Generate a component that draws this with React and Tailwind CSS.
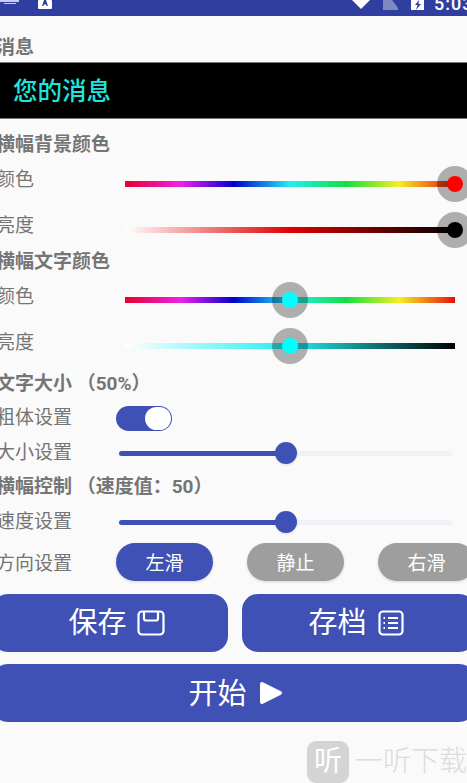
const hue = 'bg-[linear-gradient(to_right,#e8002a,#f01fe8_17%,#0000d0_33%,#22eef0_50%,#10e040_67%,#f4f020_83%,#e81010)]';

function Title({ children, className = '' }) {
    return <div className={`flex h-6 items-center pt-[3px] text-[19px] font-bold text-[#757575] ${className}`}>{children}</div>;
}

function ColorRow({ label, track, thumb, pos, shift }) {
    return (
        <div className="flex h-[46px] items-center text-[19px] text-[#757575]">
            <span className="w-[129px] pt-[3px]">{label}</span>
            <div className={`relative h-[6px] w-[330px] ${shift} ${track}`}>
                <span className={`absolute top-1/2 h-9 w-9 -translate-x-1/2 -translate-y-1/2 rounded-full bg-black/30 ${pos}`} />
                <span className={`absolute top-1/2 h-4 w-4 -translate-x-1/2 -translate-y-1/2 rounded-full ${pos} ${thumb}`} />
            </div>
        </div>
    );
}

function SeekRow({ label }) {
    return (
        <div className="flex h-[34px] items-center text-[19px] text-[#757575]">
            <span className="w-[123px] pt-[3px]">{label}</span>
            <div className="relative mt-[2px] h-[5px] w-[333px] rounded-full bg-[#f0f0f7]">
                <div className="h-full w-1/2 rounded-full bg-[#3f51b5]" />
                <span className="absolute left-1/2 top-1/2 h-[22px] w-[22px] -translate-x-1/2 -translate-y-1/2 rounded-full bg-[#3f51b5] shadow-sm" />
            </div>
        </div>
    );
}

function Pill({ children, on }) {
    return (
        <div className={`flex h-[38px] w-[97px] shrink-0 items-center justify-center rounded-full pt-1 text-[19px] text-white shadow-[0_1px_3px_rgba(0,0,0,0.15)] ${on ? 'bg-[#3f51b5]' : 'bg-[#9e9e9e]'}`}>
            {children}
        </div>
    );
}

function SaveIcon() {
    return (
        <svg width="28" height="26" viewBox="0 0 28 26" fill="none" stroke="white" strokeWidth="2.2" className="ml-[10px]">
            <rect x="1.5" y="1.500" width="25" height="23" rx="3.5" />
            <path d="M7 2v6.500a2 2 0 0 0 2 2h10a2 2 0 0 0 2-2V2" />
        </svg>
    );
}

function ListIcon() {
    return (
        <svg width="26" height="26" viewBox="0 0 26 26" fill="none" stroke="white" strokeWidth="2.2" className="ml-[11px]">
            <rect x="1.5" y="1.500" width="23" height="23" rx="3.5" />
            <path d="M10 8h10M10 13h10M10 18h10M5.500 8h1.500M5.500 13h1.500M5.500 18h1.500" />
        </svg>
    );
}

export default function App() {
    return (
        <div className="relative h-[783px] w-[467px] overflow-hidden bg-[#fafafa] font-['Roboto','Noto_Sans_CJK_SC',sans-serif]">
            <div className="flex h-4 items-start overflow-hidden bg-[#303f9f]">
                <svg width="22" height="4" viewBox="0 0 22 4" className="ml-0 shrink-0">
                    <path d="M0 0h19v2H0zM4 3h12v1H4z" fill="#c8cde8" />
                </svg>
                <svg width="14" height="9" viewBox="0 0 14 9" className="ml-4 shrink-0">
                    <rect width="14" height="9" rx="1" fill="white" />
                    <path d="M4 6l2-6h2l2 6H8.600l-.4-1.400H5.800L5.400 6z" fill="#303f9f" />
                </svg>
                <svg width="18" height="9" viewBox="0 0 18 9" className="ml-[300px] shrink-0">
                    <path d="M0 0h18L9 9z" fill="white" />
                </svg>
                <svg width="15" height="10" viewBox="0 0 15 10" className="ml-[13px] shrink-0">
                    <path d="M0 0h9l6 8v2H0z" fill="#7f8ac4" />
                </svg>
                <svg width="13" height="10" viewBox="0 0 13 10" className="ml-[13px] shrink-0">
                    <rect width="13" height="10" fill="white" />
                    <path d="M8 0L4 5h2.500L5 10l5-6H7.500z" fill="#303f9f" />
                </svg>
                <span className="-mt-[7px] ml-[10px] shrink-0 text-[18px] font-medium leading-[22px] tracking-[1px] text-white">5:03</span>
            </div>

            <div className="-ml-1 w-[490px]">
                <div className="flex h-[46px] items-end text-[19px] font-bold text-[#757575]">消息</div>
                <div className="ml-1 flex h-[57px] w-[467px] items-center border-y border-[#777] bg-black pl-[13px] pt-[3px] text-[24.500px] font-medium text-[#1fe5dc]">您的消息</div>

                <Title className="mt-[13px]">横幅背景颜色</Title>
                <ColorRow label="颜色" track={hue} thumb="bg-[#ff0000]" pos="left-full" shift="mt-[10px]" />
                <ColorRow label="亮度" track="bg-[linear-gradient(to_right,#ffffff,#e00000_50%,#000000)]" thumb="bg-black" pos="left-full" shift="mt-[10px]" />

                <Title className="mt-px">横幅文字颜色</Title>
                <ColorRow label="颜色" track={hue} thumb="bg-[#00ffff]" pos="left-1/2" shift="mt-2" />
                <ColorRow label="亮度" track="bg-[linear-gradient(to_right,#ffffff,#22eef0_50%,#000000)]" thumb="bg-[#00ffff]" pos="left-1/2" shift="mt-2" />

                <Title className="mt-[6px]">文字大小 （50%）</Title>
                <div className="mt-[6px] flex h-[34px] items-center text-[19px] text-[#757575]">
                    <span className="w-[120px]">粗体设置</span>
                    <div className="flex h-[25px] w-14 justify-end rounded-full bg-[#3f51b5] p-px">
                        <span className="h-[23px] w-[26px] rounded-full bg-white" />
                    </div>
                </div>
                <SeekRow label="大小设置" />
                <Title className="mt-[5px]">横幅控制 （速度值：50）</Title>
                <div className="mt-[6px]">
                    <SeekRow label="速度设置" />
                </div>
                <div className="mt-[5px] flex h-[38px] items-center text-[19px] text-[#757575]">
                    <span className="w-[120px] pt-1">方向设置</span>
                    <div className="flex gap-[34px]">
                        <Pill on>左滑</Pill>
                        <Pill>静止</Pill>
                        <Pill>右滑</Pill>
                    </div>
                </div>
            </div>

            <div className="-ml-2 mt-[13px] w-[483px]">
                <div className="flex gap-[14px]">
                    <div className="flex h-[58px] w-[236px] items-center justify-center rounded-2xl bg-[#3f51b5] pl-[13px] text-[29px] text-white">
                        <span className="pt-[2px]">保存</span><SaveIcon />
                    </div>
                    <div className="flex h-[58px] w-[233px] items-center justify-center rounded-2xl bg-[#3f51b5] pr-[5px] text-[29px] text-white">
                        <span className="pt-[2px]">存档</span><ListIcon />
                    </div>
                </div>
                <div className="mt-3 flex h-[58px] items-center justify-center rounded-2xl bg-[#3f51b5] pl-1 text-[29px] text-white">
                    <span className="pt-[3px]">开始</span>
                    <svg width="24" height="24" viewBox="0 0 24 24" className="ml-3">
                        <path d="M1 3v18a2 2 0 0 0 2.900 1.800l18-9a2 2 0 0 0 0-3.600l-18-9A2 2 0 0 0 1 3z" fill="white" />
                    </svg>
                </div>
            </div>

            {/* watermark sits over the page */}
            <div className="absolute left-[307px] top-[741px] flex items-center">
                <div className="flex h-[42px] w-[42px] items-center justify-center rounded-[9px] bg-[#d4d4d4] text-[28px] leading-none text-white">听</div>
                <span className="ml-[6px] whitespace-nowrap text-[28px] font-light leading-[42px] text-[#dcdcdc]">一听下载</span>
            </div>
        </div>
    );
}
